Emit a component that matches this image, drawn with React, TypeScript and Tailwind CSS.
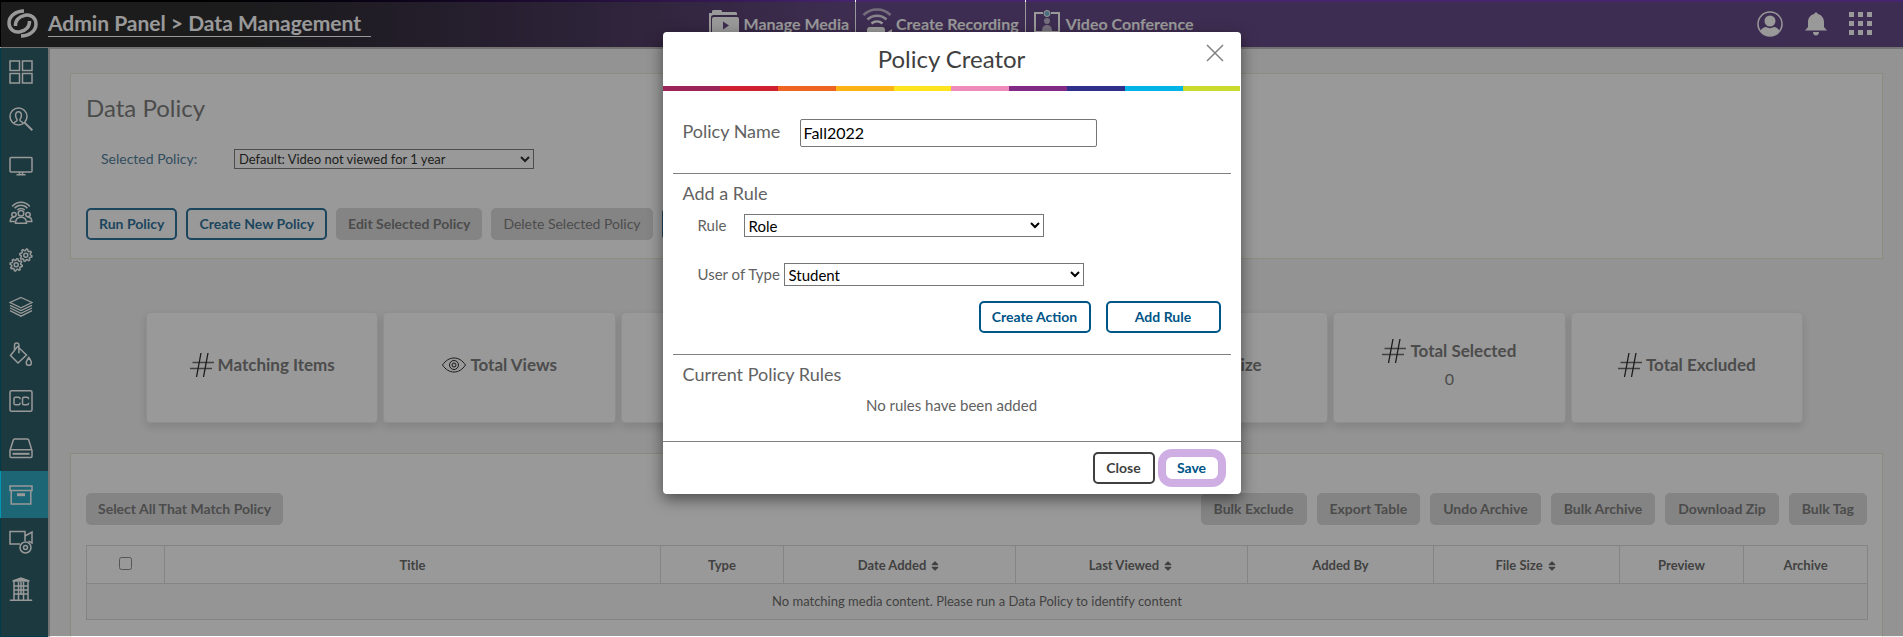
import type { ReactNode } from 'react'
import { FaSort } from 'react-icons/fa'

const outlineButton =
  'h-8 rounded-[5px] border-2 border-[#005587] bg-white text-sm font-bold text-[#005587] whitespace-nowrap'
const disabledButton = 'h-8 rounded-[5px] bg-[#d4d4d4] text-sm text-[#626262] whitespace-nowrap'

function Icon({ children, className = 'size-6' }: { children: ReactNode; className?: string }) {
  return (
    <svg className={className} viewBox="0 0 24 24" fill="none" stroke="currentColor" strokeWidth="1.5" aria-hidden="true">
      {children}
    </svg>
  )
}

// eight-toothed wheel centred on the origin
const gear = Array.from({ length: 32 }, (_, i) => {
  const radius = i % 4 < 2 ? 6.2 : 4.6
  const angle = ((i + 0.5) * Math.PI) / 16
  return `${(radius * Math.cos(angle)).toFixed(2)},${(radius * Math.sin(angle)).toFixed(2)}`
}).join(' ')

const sidebarItems = [
  {
    label: 'Dashboard',
    icon: <path d="M1 1h9.5v9.5H1zM13.5 1H23v9.5h-9.5zM1 13.5h9.5V23H1zM13.5 13.5H23V23h-9.5z" />,
  },
  {
    label: 'User Search',
    icon: (
      <>
        <circle cx="9.5" cy="9.5" r="8.5" />
        <path d="M15.6 15.6L23.3 23.3" strokeWidth="2" />
        <path d="M5 16.3c.2-1.7 3.2-1.6 3.2-3.2 0-1-1.6-2-1.6-4.6 0-2.3 1.2-3.8 2.9-3.8s2.9 1.5 2.9 3.8c0 2.6-1.6 3.6-1.6 4.6 0 1.6 3 1.5 3.2 3.2" />
      </>
    ),
  },
  {
    label: 'Display',
    icon: (
      <>
        <rect x="1" y="3.5" width="22" height="14.5" rx="1" />
        <path d="M10.5 18v2.5M13.5 18v2.5M7.5 20.8h9" />
      </>
    ),
  },
  {
    label: 'Groups',
    icon: (
      <>
        <path d="M3.2 5.5C7.8-.2 16.2-.2 20.8 5.5M5.6 7.3c3.4-4 9.4-4 12.8 0M8.2 9c2-2 5.6-2 7.6 0" />
        <circle cx="12" cy="12.3" r="2.8" />
        <circle cx="5" cy="13.6" r="2.2" />
        <circle cx="19" cy="13.6" r="2.2" />
        <path d="M6.5 22.2c0-4 2-6 5.5-6s5.5 2 5.5 6zM6 20.5H1.2c0-3 1.3-4.5 4.3-4.5M18 20.5h4.8c0-3-1.3-4.5-4.3-4.5" />
      </>
    ),
  },
  {
    label: 'Settings',
    icon: (
      <>
        <g transform="translate(16.8 7.2)">
          <polygon points={gear} strokeLinejoin="round" />
          <circle r="2" />
        </g>
        <g transform="translate(7.2 16.8)">
          <polygon points={gear} strokeLinejoin="round" />
          <circle r="2" />
        </g>
      </>
    ),
  },
  {
    label: 'Layers',
    icon: (
      <path
        d="M12 2.5L23 7.5 12 12.8 1 7.5zM1 10.3l11 5.3 11-5.3M1 13l11 5.4L23 13M1 15.7l11 5.5 11-5.5"
        strokeWidth="1.3"
      />
    ),
  },
  {
    label: 'Theme',
    icon: (
      <>
        <path d="M8.5 4.5L17.5 13l-8.5 8L1.5 13.5zM5.5 8V3.2a2.2 2.2 0 0 1 4.4 0v8" />
        <path d="M19.8 15.5c1.7 2.5 2.6 4 2.6 5.2a2.6 2.6 0 0 1-5.2 0c0-1.2 .9-2.7 2.6-5.2z" />
      </>
    ),
  },
  {
    label: 'Captions',
    icon: (
      <>
        <rect x="1" y="1.8" width="22" height="20.4" rx="1.5" />
        <path d="M11 10.2V9.5C11 8.8 10.5 8.2 9.5 8.2H6.5C5.5 8.2 5 8.8 5 9.8v4.4c0 1 .5 1.6 1.5 1.6h3c1 0 1.5-.6 1.5-1.3v-.7M19.5 10.2V9.5c0-.7-.5-1.3-1.5-1.3h-3c-1 0-1.5 .6-1.5 1.6v4.4c0 1 .5 1.6 1.5 1.6h3c1 0 1.5-.6 1.5-1.3v-.7" />
      </>
    ),
  },
  {
    label: 'Storage',
    icon: (
      <>
        <path d="M1 14.5L4.3 4c.2-.6 .6-1 1.3-1h12.8c.7 0 1.1 .4 1.3 1L23 14.5v5.7c0 .7-.4 1.2-1.1 1.2H2.1C1.4 21.4 1 20.9 1 20.2zM1 13.8h22" />
        <path d="M3.5 17.8h17" strokeWidth="2" />
      </>
    ),
  },
  {
    label: 'Data Management',
    active: true,
    icon: (
      <>
        <path d="M1 3h22v4.5H1zM2.2 7.5h19.6V21H2.2z" />
        <path d="M8 11.7h8" strokeWidth="3" />
      </>
    ),
  },
  {
    label: 'Capture Devices',
    icon: (
      <>
        <path d="M11 14H1V1.5h15V11M16 6l7-4v11l-3.5-1.8" />
        <circle cx="16.5" cy="17.5" r="5.5" />
        <circle cx="16.5" cy="17.5" r="2" />
      </>
    ),
  },
  {
    label: 'Institution',
    icon: (
      <>
        <path d="M12 .3l8.5 3v1.4h-17V3.3z" fill="currentColor" stroke="none" />
        <path d="M5 4v19M19 4v19M.8 23.2h22.4M5 9h14M5 13h14M5 17h14M9.5 5v18M14.5 5v18M12 5v13" />
      </>
    ),
  },
]

const navItems = [
  {
    label: 'Manage Media',
    icon: (
      <svg className="h-7 w-[30px]" viewBox="0 0 30 28" fill="currentColor" aria-hidden="true">
        <path d="M0 26V3h3V1.5C3 .6 3.6 0 4.5 0h7c.9 0 1.5 .6 1.5 1.5V2h13.5c.8 0 1.5 .7 1.5 1.5V5H4.5C3 5 2 6 2 7.5V26z" />
        <rect x="3" y="7" width="27" height="21" rx="2" />
        <path d="M14 11.500l6 4-6 4z" fill="#47246e" />
      </svg>
    ),
  },
  {
    label: 'Create Recording',
    icon: (
      <svg className="h-8 w-[30px]" viewBox="0 0 30 32" fill="none" stroke="currentColor" strokeWidth="2.5" aria-hidden="true">
        <path d="M1.5 7c7.5-7.3 19.5-7.3 27 0" opacity=".6" />
        <path d="M5.5 11.5c5.5-5 13.5-5 19 0" opacity=".8" />
        <path d="M9.5 15.5c3.3-2.6 7.7-2.6 11 0" />
        <rect x="5" y="19" width="18" height="13" rx="3" fill="currentColor" stroke="none" />
        <path d="M24 25l6-4v11h-6z" fill="currentColor" stroke="none" />
      </svg>
    ),
  },
  {
    label: 'Video Conference',
    icon: (
      <svg className="h-7 w-[30px]" viewBox="0 0 30 28" fill="none" stroke="currentColor" aria-hidden="true">
        <path d="M11 3H3v19h24V3h-8" strokeWidth="2" />
        <circle cx="15" cy="3.5" r="3" fill="#5aa9c4" />
        <circle cx="15" cy="11" r="3" fill="currentColor" stroke="none" opacity=".6" />
        <path d="M10 21c0-4 2-6 5-6s5 2 5 6z" fill="currentColor" stroke="none" opacity=".6" />
        <path d="M1 25h28" strokeWidth="2" />
      </svg>
    ),
  },
]

function TopBar() {
  return (
    <header className="grid h-[49px] grid-cols-[1fr_auto_1fr] border-b-2 border-[#b5b0b0] bg-linear-to-r from-black from-5% to-[#47246e] to-45% text-white">
      <div className="flex items-center gap-[10px] pl-[7px]">
        <svg className="size-[31px]" viewBox="0 0 31 29" fill="none" stroke="currentColor" strokeWidth="3.5" aria-hidden="true">
          <path d="M17 2C9 2 2 7 2 14c0 6 5 10 11 8.8 6-1.3 9.8-5.3 9.5-10.8" />
          <path d="M14 27c8 0 15-5 15-12 0-6-5-10-11-8.8-6 1.3-9.8 5.3-9.5 10.8" />
        </svg>
        <a href="#" className="h-[26px] border-b border-white pr-[10px] text-[21px] leading-6 font-bold whitespace-nowrap">
          Admin Panel &gt; Data Management
        </a>
      </div>
      <nav className="flex">
        {navItems.map((item) => (
          <a
            key={item.label}
            href="#"
            className="flex items-center gap-1 border-r border-white px-[6px] text-base font-bold whitespace-nowrap last:border-r-0"
          >
            {item.icon}
            {item.label}
          </a>
        ))}
      </nav>
      <div className="flex items-center justify-end gap-[22px] pr-[31px]">
        <button type="button" aria-label="Account">
          <svg className="size-[26px]" viewBox="0 0 26 26" aria-hidden="true">
            <circle cx="13" cy="13" r="12" fill="none" stroke="currentColor" strokeWidth="1.5" />
            <circle cx="13" cy="10" r="5.5" fill="currentColor" />
            <path d="M3.5 20c1.5-3 3.5-4 5.5-4 2.5 1.5 5.5 1.5 8 0 2 0 4 1 5.500 4a12 12 0 0 1-19 0z" fill="currentColor" />
          </svg>
        </button>
        <button type="button" aria-label="Notifications">
          <svg className="h-6 w-[22px]" viewBox="0 0 22 24" fill="currentColor" aria-hidden="true">
            <path d="M11 .5c1 0 1.7 .6 1.8 1.5C16.7 3 19 6 19 10v5l3 3.5H0L3 15v-5c0-4 2.3-7 6.2-8C9.3 1.1 10 .5 11 .5zM8 20h6c0 2-1.2 3.5-3 3.5S8 22 8 20z" />
          </svg>
        </button>
        <button type="button" aria-label="Apps">
          <svg className="size-[23px]" viewBox="0 0 23 23" fill="currentColor" aria-hidden="true">
            {[0, 9, 18].map((y) => [0, 9, 18].map((x) => <rect key={`${x}-${y}`} x={x} y={y} width="5" height="5" />))}
          </svg>
        </button>
      </div>
    </header>
  )
}

function Sidebar() {
  return (
    <nav className="-mt-px w-[50px] shrink-0 border-r-2 border-[#b5b0b0] bg-[#003c48] text-white">
      {sidebarItems.map((item) => (
        <a
          key={item.label}
          href="#"
          aria-label={item.label}
          className={`flex h-[47px] items-center pl-[9px] ${item.active ? 'bg-[#0097b5]' : ''}`}
        >
          <Icon>{item.icon}</Icon>
        </a>
      ))}
    </nav>
  )
}

const hashIcon = (
  <svg className="size-6 text-black" viewBox="0 0 24 24" fill="none" stroke="currentColor" aria-hidden="true">
    <path d="M2.5 9.5H24M0 15.5h22" strokeWidth="1.5" opacity=".7" />
    <path d="M11 0L6.5 24M18 0l-4.5 24" strokeWidth="1.3" />
  </svg>
)

const eyeIcon = (
  <svg className="size-6 text-black" viewBox="0 0 24 24" fill="none" stroke="currentColor" aria-hidden="true">
    <path d="M.5 12C3.5 7.5 7.5 5 12 5s8.5 2.5 11.5 7c-3 4.5-7 7-11.5 7S3.5 16.5 .5 12z" />
    <circle cx="12" cy="12" r="4.5" />
    <circle cx="12" cy="12" r="2" />
  </svg>
)

const stats = [
  { id: 'matching', label: 'Matching Items', icon: hashIcon },
  { id: 'views', label: 'Total Views', icon: eyeIcon },
  { id: 'first-empty' },
  { id: 'second-empty' },
  { id: 'size', label: 'Total Size', icon: hashIcon },
  { id: 'selected', label: 'Total Selected', icon: hashIcon, value: '0' },
  { id: 'excluded', label: 'Total Excluded', icon: hashIcon },
]

function Stats() {
  return (
    <section className="mt-[53px] mr-20 mb-[30px] ml-[76px] grid grid-cols-7 gap-[5px]">
      {stats.map((stat) => (
        <div
          key={stat.id}
          className="flex h-[111px] flex-col items-center justify-center rounded border border-[#eaeaea] bg-white pb-[6px] text-[#626262] shadow-[0_4px_10px_rgba(0,0,0,0.15)]"
        >
          {stat.label && (
            <h3 className="flex items-center gap-1 text-[17px] leading-6 font-bold">
              {stat.icon}
              {stat.label}
            </h3>
          )}
          {stat.value && <p className="pt-1 text-base">{stat.value}</p>}
        </div>
      ))}
    </section>
  )
}

const columns = [
  { label: 'Title', width: 'w-[496px]' },
  { label: 'Type', width: 'w-[123px]' },
  { label: 'Date Added', width: 'w-[232px]', sortable: true },
  { label: 'Last Viewed', width: 'w-[232px]', sortable: true },
  { label: 'Added By', width: 'w-[186px]' },
  { label: 'File Size', width: 'w-[186px]', sortable: true },
  { label: 'Preview', width: 'w-[124px]' },
  { label: 'Archive', width: 'w-[124px]' },
]

const bulkActions = ['Bulk Exclude', 'Export Table', 'Undo Archive', 'Bulk Archive', 'Download Zip', 'Bulk Tag']

function MediaTable() {
  return (
    <section className="border border-[#dfe3c8] bg-white px-[15px] pt-[39px] pb-10">
      <div className="mb-5 flex justify-between">
        <button type="button" className={`${disabledButton} px-3 font-bold`}>
          Select All That Match Policy
        </button>
        <div className="flex gap-[10px]">
          {bulkActions.map((action) => (
            <button key={action} type="button" className={`${disabledButton} px-[13px] font-bold`}>
              {action}
            </button>
          ))}
        </div>
      </div>
      <table className="w-full table-fixed border-collapse text-[13px] text-[#4c4c4c]">
        <thead>
          <tr className="h-[38px]">
            <th className="w-[78px] border border-[#d4d4d4]">
              <input type="checkbox" aria-label="Select all" className="mb-1 size-[13px] align-middle" />
            </th>
            {columns.map((column) => (
              <th key={column.label} className={`${column.width} border border-[#d4d4d4] pt-0.5 font-bold`}>
                {column.label}
                {column.sortable && <FaSort className="ml-[3px] inline size-3" />}
              </th>
            ))}
          </tr>
        </thead>
        <tbody>
          <tr className="h-9 bg-[#f7f7f7]">
            <td colSpan={9} className="border border-[#d4d4d4] text-center">
              No matching media content. Please run a Data Policy to identify content
            </td>
          </tr>
        </tbody>
      </table>
    </section>
  )
}

function DataPolicy() {
  return (
    <section className="border border-[#dfe8c8] bg-white px-[15px] pt-5 pb-[18px]">
      <h2 className="text-2xl leading-7 text-[#626262]">Data Policy</h2>
      <div className="mt-[27px] mb-[39px] flex items-center pl-[15px] text-sm">
        <label htmlFor="selected-policy" className="w-[133px] text-[#2c6488]">
          Selected Policy:
        </label>
        <select id="selected-policy" className="h-5 w-[300px] border border-[#626262] text-[13px] text-black">
          <option>Default: Video not viewed for 1 year</option>
        </select>
      </div>
      <div className="flex gap-[9px]">
        <button type="button" className={`${outlineButton} px-[11px]`}>Run Policy</button>
        <button type="button" className={`${outlineButton} px-[11px]`}>Create New Policy</button>
        <button type="button" className={`${disabledButton} px-3 font-bold`}>Edit Selected Policy</button>
        <button type="button" className={`${disabledButton} px-3`}>Delete Selected Policy</button>
        <button type="button" aria-label="More actions" className={`${outlineButton} w-24`} />
      </div>
    </section>
  )
}

function PolicyCreator() {
  return (
    <div
      role="dialog"
      aria-labelledby="policy-creator-title"
      className="absolute top-8 left-1/2 w-[578px] -translate-x-1/2 rounded bg-white text-[#626262] shadow-[0_5px_15px_rgba(0,0,0,0.5)]"
    >
      <div className="relative flex h-[54px] items-center justify-center">
        <h1 id="policy-creator-title" className="text-2xl text-[#3f3f3f]">Policy Creator</h1>
        <button type="button" aria-label="Close" className="absolute top-3 right-[17px] text-[#808080]">
          <svg className="size-[18px]" viewBox="0 0 18 18" fill="none" stroke="currentColor" strokeWidth="1.5" aria-hidden="true">
            <path d="M1 1l16 16M17 1L1 17" />
          </svg>
        </button>
      </div>
      <div className="grid h-[5px] grid-cols-10">
        <span className="bg-[#9b2559]" />
        <span className="bg-[#cf2031]" />
        <span className="bg-[#ee6423]" />
        <span className="bg-[#fcb316]" />
        <span className="bg-[#fee41f]" />
        <span className="bg-[#ee8bbb]" />
        <span className="bg-[#822b85]" />
        <span className="bg-[#2e3089]" />
        <span className="bg-[#00b4e6]" />
        <span className="bg-[#cadb2b]" />
      </div>

      <div className="px-[10px]">
        <div className="flex items-start border-b border-[#808080] px-[10px] pt-7 pb-[26px]">
          <label htmlFor="policy-name" className="w-[117px] text-lg leading-6">Policy Name</label>
          <input
            id="policy-name"
            defaultValue="Fall2022"
            className="h-7 w-[297px] rounded-xs border border-[#767676] px-[3px] pb-0.5 text-base text-black"
          />
        </div>

        <div className="border-b border-[#808080] px-[10px] pt-[7px] pb-[21px]">
          <h2 className="text-lg leading-6">Add a Rule</h2>
          <div className="mt-[9px] flex items-center pl-[15px]">
            <label htmlFor="rule" className="w-[46px] text-[15px]">Rule</label>
            <select id="rule" className="h-[23px] w-[300px] border border-[#767676] text-[15px] text-black">
              <option>Role</option>
            </select>
          </div>
          <div className="mt-[26px] flex items-center pl-[15px]">
            <label htmlFor="user-type" className="w-[86px] text-[15px] whitespace-nowrap">User of Type</label>
            <select id="user-type" className="h-[23px] w-[300px] border border-[#767676] text-[15px] text-black">
              <option>Student</option>
            </select>
          </div>
          <div className="mt-[15px] flex justify-end gap-[15px]">
            <button type="button" className={`${outlineButton} w-28`}>Create Action</button>
            <button type="button" className={`${outlineButton} w-[115px]`}>Add Rule</button>
          </div>
        </div>

        <div className="px-[10px] pt-[7px] pb-[25px]">
          <h2 className="text-lg leading-6">Current Policy Rules</h2>
          <p className="mt-2 text-center text-[15px] leading-[22px]">No rules have been added</p>
        </div>
      </div>

      <div className="flex items-center justify-end gap-[3px] border-t border-[#808080] px-[15px] py-[7px]">
        <button type="button" className="h-8 w-[62px] rounded-[5px] border-2 border-[#3f3f3f] text-sm font-bold text-[#3f3f3f]">
          Close
        </button>
        <button type="button" className="h-[38px] w-[68px] rounded-[14px] border-8 border-[#cfaee4] text-sm leading-none font-bold text-[#005587]">
          Save
        </button>
      </div>
    </div>
  )
}

export default function App() {
  return (
    <div className="relative h-screen overflow-hidden bg-[#f3f3f3] font-[Lato,sans-serif]">
      <TopBar />
      <div className="flex h-full">
        <Sidebar />
        <main className="min-w-0 flex-1 px-5 pt-6">
          <DataPolicy />
          <Stats />
          <MediaTable />
        </main>
      </div>
      {/* modal backdrop */}
      <div className="absolute inset-x-0 top-0.5 bottom-px left-px bg-[#373737]/51" />
      <PolicyCreator />
    </div>
  )
}
